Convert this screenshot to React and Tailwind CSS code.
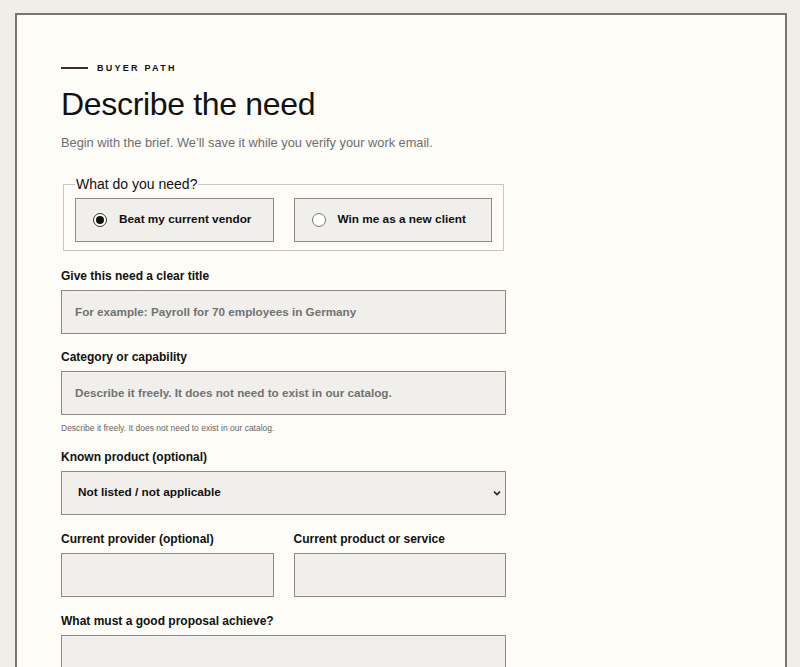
import React, { useState } from 'react';

const font = { fontFamily: '"Liberation Sans", Arial, sans-serif' };

const Label = ({ children }) => (
  <label className="block text-[12px] leading-[14px] font-bold text-[#111] mb-[7px]">{children}</label>
);

const Box = ({ placeholder, tall }) => (
  <div
    className={`w-full ${tall ? 'h-[60px]' : 'h-[44px]'} bg-[#f0efeb] border border-[#8c8c88] flex items-center px-[13px] text-[11.7px] font-bold text-[#727272]`}
  >
    {placeholder}
  </div>
);

const RadioCard = ({ label, checked, onClick }) => (
  <button
    type="button"
    onClick={onClick}
    className="h-[44px] bg-[#f0efeb] border border-[#8c8c88] flex items-center pl-[17px] gap-[12px] text-[11.8px] font-bold text-[#111]"
  >
    {checked ? (
      <span className="w-[14px] h-[14px] rounded-full border border-[#333] bg-white flex items-center justify-center">
        <span className="w-[8px] h-[8px] rounded-full bg-[#111]" />
      </span>
    ) : (
      <span className="w-[14px] h-[14px] rounded-full border border-[#777] bg-white" />
    )}
    {label}
  </button>
);

export default function App() {
  const [need, setNeed] = useState('beat');

  return (
    <div className="min-h-[667px] bg-[#efeee9] pl-[15px] pr-[13px] pt-[13px]" style={font}>
      <div className="bg-[#fdfcf7] border-l-2 border-t-2 border-r-2 border-[#77776f] min-h-[660px] pl-[44px] pt-[47px]">
        <div className="w-[445px]">
          <div className="flex items-center gap-[9px]">
            <span className="w-[27px] h-[1.5px] bg-[#333]" />
            <span className="text-[9px] leading-[12px] font-bold tracking-[0.25em] text-[#111]">BUYER PATH</span>
          </div>
          <h1 className="mt-[12px] text-[32px] leading-[37px] text-[#111] tracking-[-0.01em]">Describe the need</h1>
          <p className="mt-[12px] text-[12.8px] leading-[16px] text-[#6e6e6e]">
            Begin with the brief. We’ll save it while you verify your work email.
          </p>

          <fieldset className="mt-[25px] mx-[2px] border border-[#c9c8c2] px-[11px] pb-[8px] pt-[5px]">
            <legend className="px-[1px] text-[14px] leading-[17px] text-[#111]">What do you need?</legend>
            <div className="grid grid-cols-2 gap-[20px]">
              <RadioCard label="Beat my current vendor" checked={need === 'beat'} onClick={() => setNeed('beat')} />
              <RadioCard label="Win me as a new client" checked={need === 'win'} onClick={() => setNeed('win')} />
            </div>
          </fieldset>

          <div className="mt-[18px]">
            <Label>Give this need a clear title</Label>
            <Box placeholder="For example: Payroll for 70 employees in Germany" />
          </div>

          <div className="mt-[16px]">
            <Label>Category or capability</Label>
            <Box placeholder="Describe it freely. It does not need to exist in our catalog." />
            <p className="mt-[8px] text-[8.5px] leading-[10px] text-[#666]">
              Describe it freely. It does not need to exist in our catalog.
            </p>
          </div>

          <div className="mt-[17px]">
            <Label>Known product (optional)</Label>
            <div className="w-full h-[44px] bg-[#f0efeb] border border-[#8c8c88] flex items-center justify-between pl-[16px] pr-[3px] text-[11.8px] font-bold text-[#111]">
              <span>Not listed / not applicable</span>
              <svg width="10" height="10" viewBox="0 0 10 10" fill="none" stroke="#222" strokeWidth="1.6">
                <path d="M2 3.5 L5 6.5 L8 3.5" />
              </svg>
            </div>
          </div>

          <div className="mt-[17px] grid grid-cols-2 gap-[20px]">
            <div>
              <Label>Current provider (optional)</Label>
              <Box />
            </div>
            <div>
              <Label>Current product or service</Label>
              <Box />
            </div>
          </div>

          <div className="mt-[17px]">
            <Label>What must a good proposal achieve?</Label>
            <Box tall />
          </div>
        </div>
      </div>
    </div>
  );
}
